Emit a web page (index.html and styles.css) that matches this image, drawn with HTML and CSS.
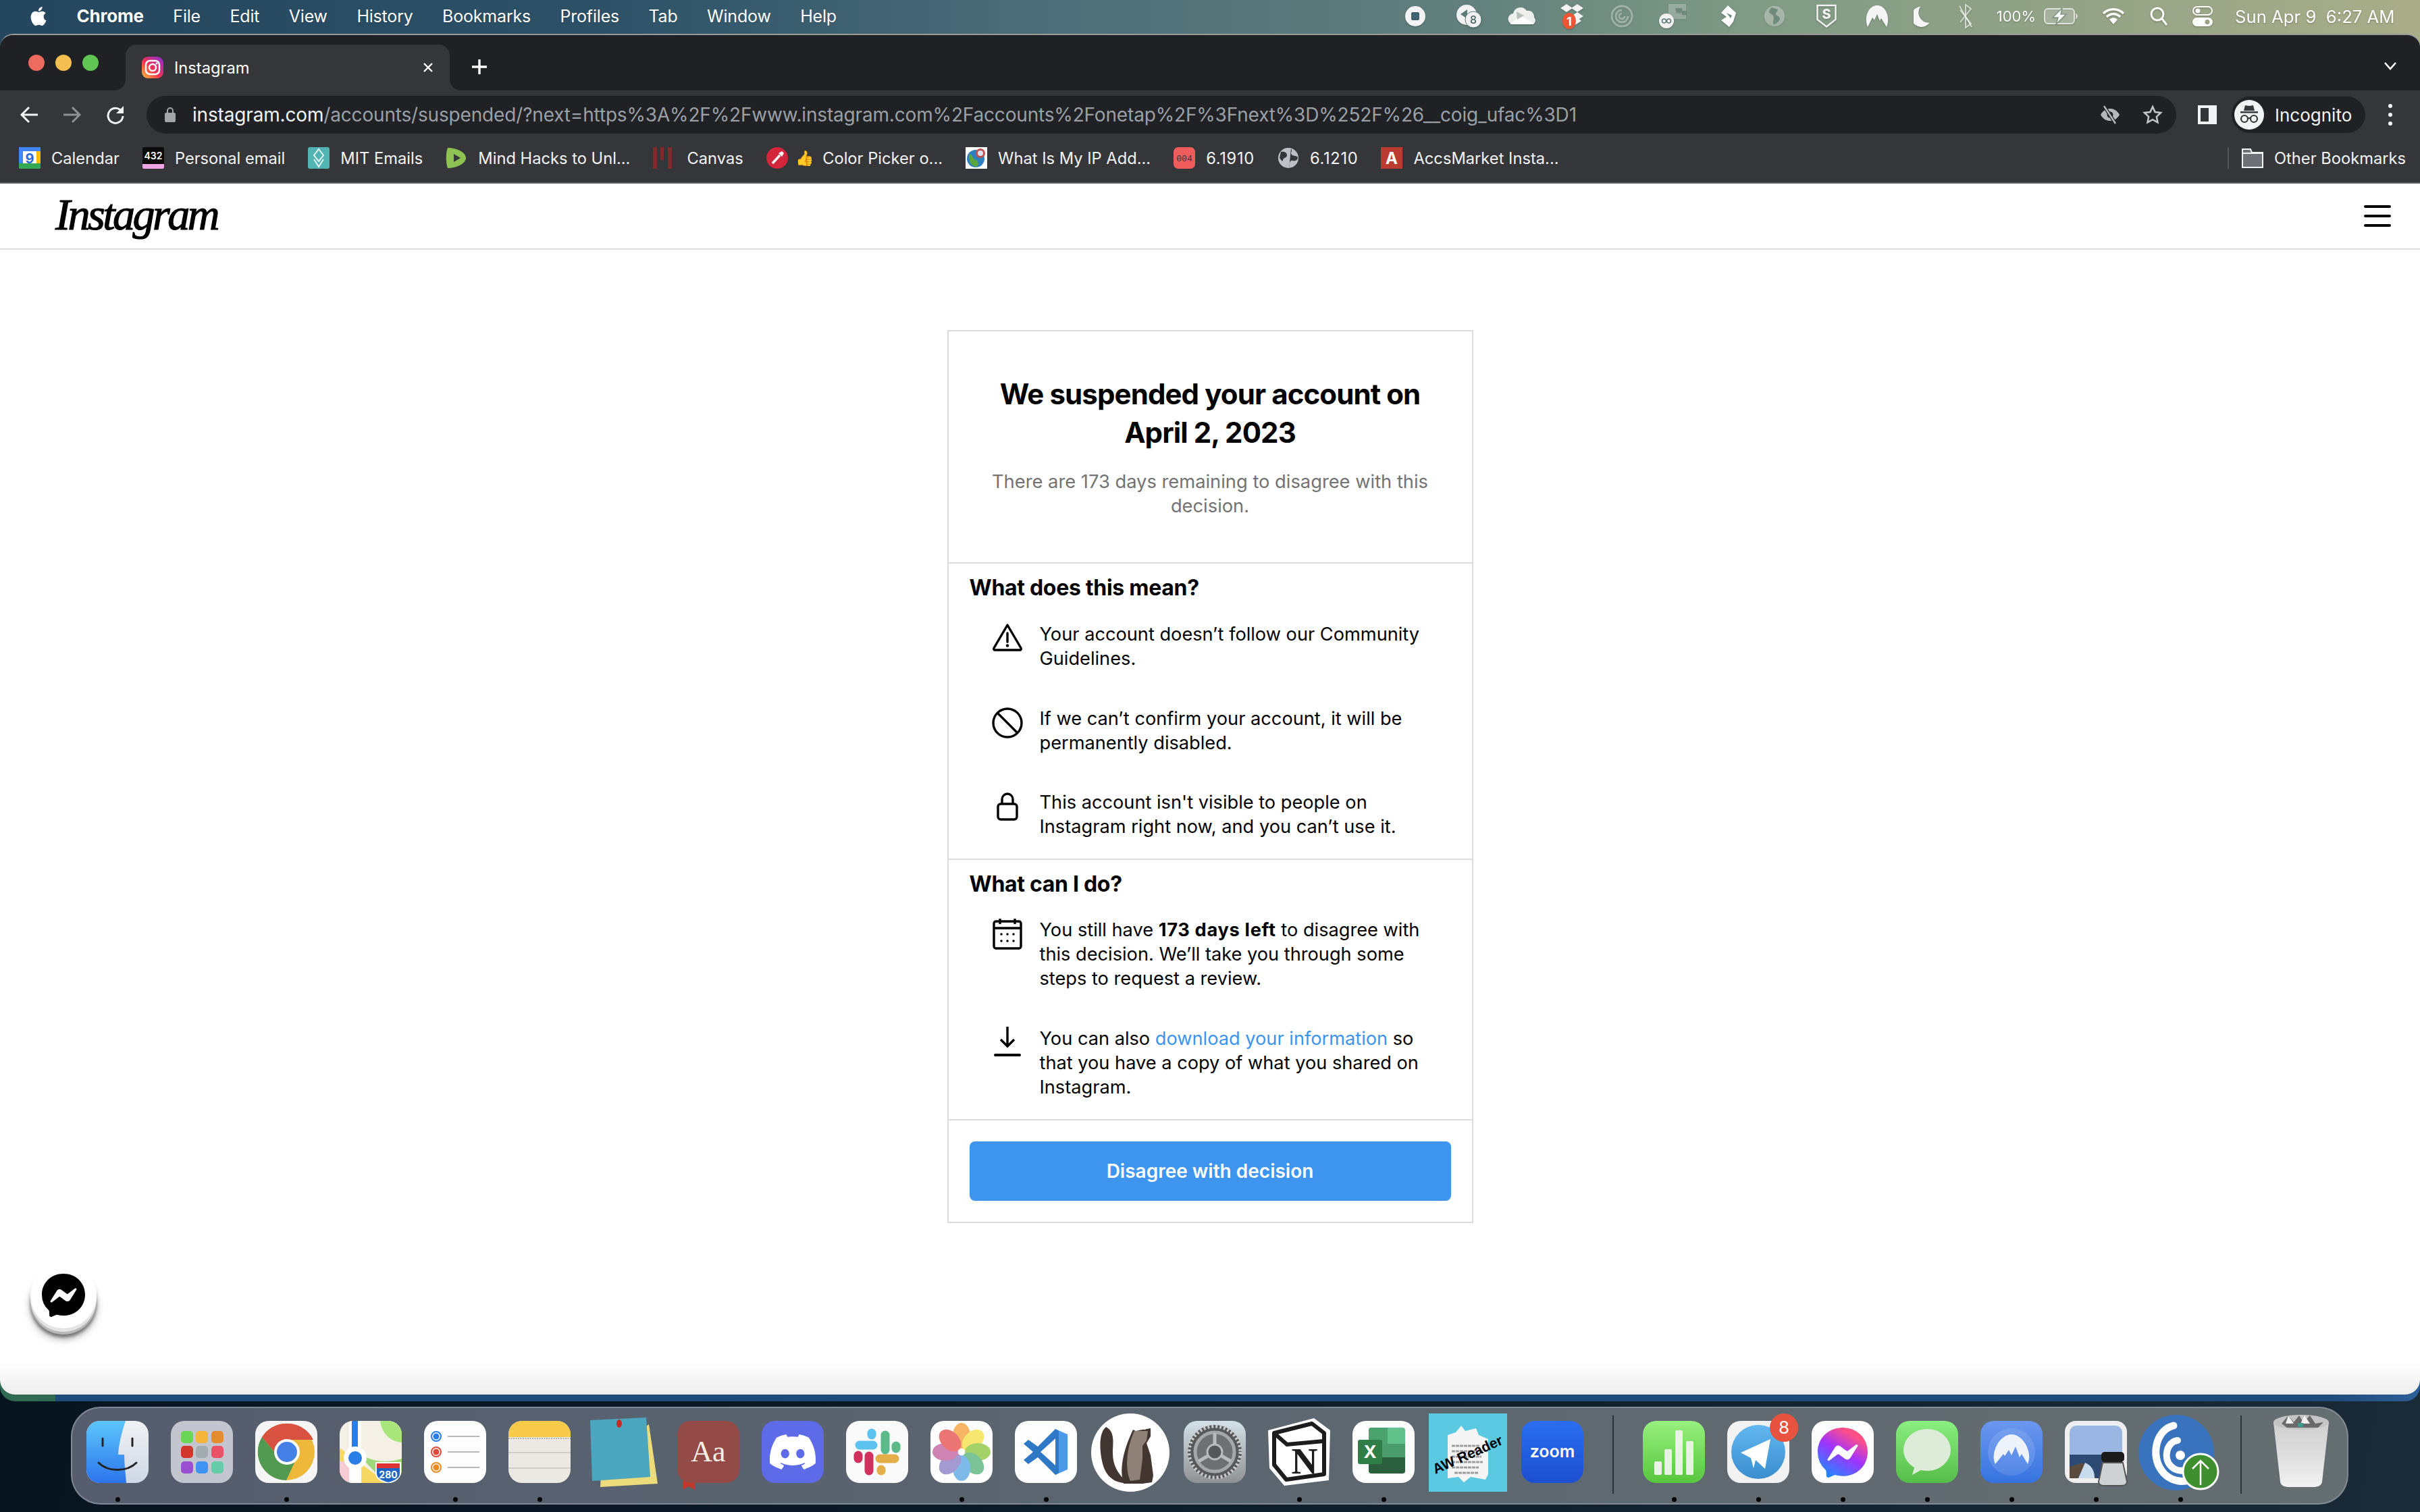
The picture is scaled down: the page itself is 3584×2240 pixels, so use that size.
FILE: index.html
```html
<!DOCTYPE html>
<html lang="en">
<head>
<meta charset="utf-8">
<title>Instagram</title>
<link rel="stylesheet" href="styles.css">
</head>
<body>
<svg class="defs" aria-hidden="true"><defs>
<linearGradient id="gIg" x1="0" y1="1" x2="1" y2="0"><stop offset="0" stop-color="#fdc13a"/><stop offset=".45" stop-color="#f0324f"/><stop offset="1" stop-color="#8a2be2"/></linearGradient>
<linearGradient id="gMsg" x1="0.2" y1="1" x2="0.8" y2="0"><stop offset="0" stop-color="#1a8cff"/><stop offset=".5" stop-color="#a033ff"/><stop offset=".85" stop-color="#ff4f87"/></linearGradient>
<linearGradient id="gFinder" x1="0" y1="0" x2="0" y2="1"><stop offset="0" stop-color="#5cc6fb"/><stop offset="1" stop-color="#2c74ec"/></linearGradient>
<linearGradient id="gFinder2" x1="0" y1="0" x2="0" y2="1"><stop offset="0" stop-color="#f0f2f4"/><stop offset="1" stop-color="#cfd8e6"/></linearGradient>
<linearGradient id="gNum" x1="0" y1="0" x2="0" y2="1"><stop offset="0" stop-color="#97f07e"/><stop offset="1" stop-color="#58c63e"/></linearGradient>
<linearGradient id="gMsgs" x1="0" y1="0" x2="0" y2="1"><stop offset="0" stop-color="#8bee80"/><stop offset="1" stop-color="#55bd4a"/></linearGradient>
<linearGradient id="gNord" x1="0" y1="0" x2="0" y2="1"><stop offset="0" stop-color="#6b97ee"/><stop offset="1" stop-color="#3673e0"/></linearGradient>
<linearGradient id="gZoom" x1="0" y1="0" x2="0" y2="1"><stop offset="0" stop-color="#2a6df0"/><stop offset="1" stop-color="#1c4fd0"/></linearGradient>
<linearGradient id="gTele" x1="0" y1="0" x2="0" y2="1"><stop offset="0" stop-color="#62b7f0"/><stop offset="1" stop-color="#3a8ecf"/></linearGradient>
<linearGradient id="gPrefs" x1="0" y1="0" x2="0" y2="1"><stop offset="0" stop-color="#d3e1e8"/><stop offset="1" stop-color="#8f9294"/></linearGradient>
<linearGradient id="gTrash" x1="0" y1="0" x2="0" y2="1"><stop offset="0" stop-color="#d0d0d0"/><stop offset=".5" stop-color="#dedede"/><stop offset="1" stop-color="#f2f2f2"/></linearGradient>
</defs></svg>

<div class="screen">
  <header class="menubar">
    <nav class="menus">
      <svg class="apple" viewBox="0 0 24 24"><path fill="#fff" d="M12.152 6.896c-.948 0-2.415-1.078-3.96-1.04-2.04.027-3.91 1.183-4.961 3.014-2.117 3.675-.546 9.103 1.519 12.09 1.013 1.454 2.208 3.09 3.792 3.039 1.52-.065 2.09-.987 3.935-.987 1.831 0 2.35.987 3.96.948 1.637-.026 2.676-1.48 3.676-2.948 1.156-1.688 1.636-3.325 1.662-3.415-.039-.013-3.182-1.221-3.22-4.857-.026-3.04 2.48-4.494 2.597-4.559-1.429-2.09-3.623-2.324-4.39-2.376-2-.156-3.675 1.09-4.61 1.09zM15.53 3.83c.843-1.012 1.4-2.427 1.245-3.83-1.207.052-2.662.805-3.532 1.818-.78.896-1.454 2.338-1.273 3.714 1.338.104 2.715-.688 3.559-1.701"/></svg>
      <span class="menu menu-app">Chrome</span>
      <span class="menu">File</span><span class="menu">Edit</span><span class="menu">View</span><span class="menu">History</span><span class="menu">Bookmarks</span><span class="menu">Profiles</span><span class="menu">Tab</span><span class="menu">Window</span><span class="menu">Help</span>
    </nav>
    <div class="status">
      <svg width="32" height="32" viewBox="0 0 32 32"><circle cx="16" cy="16" r="15" fill="#f4f4f4"/><rect x="10" y="10" width="12" height="12" rx="2" fill="#3f6470"/></svg>
      <svg width="44" height="36" viewBox="0 0 44 36"><circle cx="17" cy="16" r="15" fill="#f2f2f2"/><path d="M8 15l10-7v14z" fill="#5d7b78"/><circle cx="27" cy="23" r="12" fill="#f2f2f2" stroke="#5d7b78"/><text x="27" y="29" class="st-num">8</text></svg>
      <svg width="44" height="30" viewBox="0 0 44 30"><path d="M10 27a8 8 0 0 1-1-16 11 11 0 0 1 20-4 9 9 0 0 1 11 10 6 6 0 0 1-2 10z" fill="#eef0ee"/><path d="M4 27l16-13 20 13z" fill="#fff"/><path d="M14 8l11 6-10 6z" fill="#b5c0ba"/></svg>
      <svg width="40" height="40" viewBox="0 0 40 40"><path d="M12 2l9 6-9 6-9-6zM28 2l9 6-9 6-9-6zM28 14l9 6-9 6-9-6zM20 28l8-6 6 5-14 9z" fill="#f4f4f4"/><ellipse cx="16" cy="27" rx="10" ry="12" fill="#ee5535"/><text x="16" y="34" class="st-badge">1</text></svg>
      <svg width="36" height="36" viewBox="0 0 36 36" fill="none" stroke="#fff" stroke-opacity=".35" stroke-width="3"><circle cx="18" cy="18" r="15"/><path d="M18 9a9 9 0 1 0 9 9M18 14a4 4 0 1 0 4 4"/></svg>
      <svg width="44" height="40" viewBox="0 0 44 40"><path d="M14 2h26v22H14z" fill="#fff" fill-opacity=".28"/><path d="M24 8h10v4h6v6h-6v-3h-8z" fill="#6d8a7d"/><circle cx="11" cy="27" r="11" fill="#f1f1f1"/><circle cx="7.5" cy="27" r="3" fill="none" stroke="#5d7b78" stroke-width="1.6"/><circle cx="14.5" cy="27" r="3" fill="none" stroke="#5d7b78" stroke-width="1.6"/></svg>
      <svg width="28" height="32" viewBox="0 0 28 32"><path d="M14 0l12 11-4 13-6 8L4 22l8-5-8-6z" fill="#fff"/><path d="M12 11l8 4-2 4z" fill="#6d8a7d"/></svg>
      <svg width="32" height="32" viewBox="0 0 32 32"><circle cx="16" cy="16" r="15" fill="#fff" fill-opacity=".35"/><path d="M12 3c-4 3-5 7-2 9s5 2 5 6-2 7 0 10c5-2 9-6 9-9s-5-3-6-6 3-5 3-7z" fill="#6d8a7d"/></svg>
      <svg width="32" height="36" viewBox="0 0 32 36"><path d="M2.500 2h27v21L16 33.500 2.500 23z" fill="none" stroke="#f2f2f2" stroke-width="2.500"/><text x="16" y="22" class="st-s">S</text></svg>
      <svg width="36" height="36" viewBox="0 0 36 36"><path d="M4 34C-2 20 5 2 18 2s20 18 14 32l-8-13-2 4-4-10-4 9-3-4z" fill="#f5f5f5"/></svg>
      <svg width="26" height="32" viewBox="0 0 28 36"><path d="M11 2a17 17 0 1 0 15 27A17 17 0 0 1 11 2z" fill="#f5f5f5"/></svg>
      <svg width="22" height="36" viewBox="0 0 22 36" fill="none" stroke="#fff" stroke-opacity=".65" stroke-width="2"><path d="M3 9l16 20-8 6V1l8 6L3 27"/><path d="M2 3l18 31"/></svg>
      <span class="st-pct">100%</span>
      <svg width="50" height="24" viewBox="0 0 50 24"><rect x="1" y="1" width="44" height="22" rx="5" fill="#fff" fill-opacity=".25" stroke="#fff" stroke-opacity=".7" stroke-width="2"/><path d="M47 8v8c2 0 3-2 3-4s-1-4-3-4z" fill="#fff" fill-opacity=".6"/><path d="M27 0L13 14h8l-3 10 15-15h-8z" fill="#fff" stroke="#7f9784" stroke-width="1.500"/></svg>
      <svg width="34" height="26" viewBox="0 0 34 26" fill="none" stroke="#fff" stroke-width="3.500"><path d="M2 9a21 21 0 0 1 30 0M7 14a14 14 0 0 1 20 0"/><path d="M17 25l-6-7a8 8 0 0 1 12 0z" fill="#fff" stroke="none"/></svg>
      <svg width="28" height="30" viewBox="0 0 28 30" fill="none" stroke="#fff" stroke-width="3"><circle cx="12" cy="12" r="9"/><path d="M19 19l7 9"/></svg>
      <svg width="30" height="30" viewBox="0 0 30 30"><rect x="1" y="1" width="28" height="12" rx="6" fill="none" stroke="#fff" stroke-width="2"/><circle cx="8" cy="7" r="3.500" fill="#fff"/><rect x="0" y="17" width="30" height="13" rx="6.500" fill="#fff"/><circle cx="22" cy="23.500" r="3.500" fill="#9aa383"/></svg>
      <span class="st-date">Sun Apr 9&nbsp; 6:27 AM</span>
    </div>
  </header>

  <div class="window">
    <div class="tabstrip">
      <div class="lights"><i class="light light-r"></i><i class="light light-y"></i><i class="light light-g"></i></div>
      <div class="tab">
        <svg width="32" height="32" viewBox="0 0 32 32"><rect width="32" height="32" rx="9" fill="url(#gIg)"/><rect x="6" y="6" width="20" height="20" rx="6" fill="none" stroke="#fff" stroke-width="2.500"/><circle cx="16" cy="16" r="5" fill="none" stroke="#fff" stroke-width="2.500"/><circle cx="22" cy="10" r="1.500" fill="#fff"/></svg>
        <span class="tab-title">Instagram</span>
        <svg class="tab-close" width="16" height="16" viewBox="0 0 16 16"><path d="M2 2l12 12M14 2L2 14" stroke="#fff" stroke-width="2.400"/></svg>
      </div>
      <svg class="newtab" width="24" height="24" viewBox="0 0 24 24"><path d="M12 1v22M1 12h22" stroke="#fff" stroke-width="3.400"/></svg>
      <svg class="tabmenu" width="20" height="14" viewBox="0 0 20 14"><path d="M2 2l8 9 8-9" fill="none" stroke="#fff" stroke-width="2.600"/></svg>
    </div>

    <div class="toolbar">
      <div class="navbtn"><svg width="28" height="28" viewBox="0 0 28 28"><path d="M14 3L3 14l11 11M3 14h24" fill="none" stroke="#f1f3f4" stroke-width="3"/></svg></div>
      <div class="navbtn"><svg width="28" height="28" viewBox="0 0 28 28"><path d="M14 3l11 11-11 11M25 14H1" fill="none" stroke="#8e9094" stroke-width="3"/></svg></div>
      <div class="navbtn"><svg width="28" height="28" viewBox="0 0 28 28"><path d="M23 9a11 11 0 1 0 2 7" fill="none" stroke="#f1f3f4" stroke-width="3"/><path d="M26 1v11H15z" fill="#f1f3f4"/></svg></div>
      <div class="omnibox">
        <svg class="lock" width="16" height="22" viewBox="0 0 16 22"><rect y="8" width="16" height="14" rx="2" fill="#a3a6a9"/><path d="M4 9V5a4 4 0 0 1 8 0v4" fill="none" stroke="#a3a6a9" stroke-width="2"/></svg>
        <span class="url"><b class="url-host">instagram.com</b>/accounts/suspended/?next=https%3A%2F%2Fwww.instagram.com%2Faccounts%2Fonetap%2F%3Fnext%3D%252F%26__coig_ufac%3D1</span>
        <svg class="omni-eye" width="30" height="30" viewBox="0 0 30 30"><path d="M1 15C5 8 10 6 15 6s10 2 14 9c-4 7-9 9-14 9S5 22 1 15z" fill="#b5b7b9"/><circle cx="15" cy="15" r="4.500" fill="#202124"/><path d="M6 2l17 26" stroke="#202124" stroke-width="5"/><path d="M6 2l17 26" stroke="#b5b7b9" stroke-width="2.400"/></svg>
        <svg class="omni-star" width="30" height="30" viewBox="0 0 24 24"><path d="M12 2.500l2.900 6.300 6.800.8-5 4.700 1.300 6.800-6-3.400-6 3.400 1.300-6.800-5-4.700 6.800-.8z" fill="none" stroke="#c4c6c8" stroke-width="2"/></svg>
      </div>
      <svg class="sidebar-ic" width="28" height="28" viewBox="0 0 28 28"><rect x="0" y="0" width="28" height="28" fill="#f1f3f4"/><rect x="4" y="4" width="12" height="20" fill="#35363a"/></svg>
      <div class="incog">
        <svg width="44" height="44" viewBox="0 0 44 44"><circle cx="22" cy="22" r="22" fill="#f1f3f4"/><path d="M14 16l2-8c3 1 9 1 12 0l2 8z" fill="#35363a"/><rect x="9" y="17" width="26" height="2.500" fill="#35363a"/><circle cx="15" cy="28" r="5" fill="none" stroke="#35363a" stroke-width="2.200"/><circle cx="29" cy="28" r="5" fill="none" stroke="#35363a" stroke-width="2.200"/><path d="M20 27h4" stroke="#35363a" stroke-width="2"/></svg>
        <span class="incog-label">Incognito</span>
      </div>
      <div class="kebab"><i></i><i></i><i></i></div>
    </div>

    <div class="bookmarks">
      <div class="bm"><svg viewBox="0 0 32 32" width="32" height="32"><rect width="32" height="32" rx="3" fill="#fff"/><path d="M0 24h32v5a3 3 0 0 1-3 3H3a3 3 0 0 1-3-3z" fill="#34a853"/><rect width="6" height="24" fill="#4285f4"/><rect y="0" width="32" height="6" fill="#4285f4"/><path d="M26 6h6v18h-6z" fill="#fbbc04"/><text x="16" y="24" class="ic-cal">9</text></svg><span>Calendar</span></div>
      <div class="bm"><svg viewBox="0 0 32 32" width="32" height="32"><rect width="32" height="32" rx="2" fill="#0c0c0c"/><path d="M0 25h32v5a2 2 0 0 1-2 2H2a2 2 0 0 1-2-2z" fill="#f0a5e3"/><text x="16" y="18" class="ic-432">432</text></svg><span>Personal email</span></div>
      <div class="bm"><svg viewBox="0 0 32 32" width="32" height="32"><rect width="32" height="32" rx="3" fill="#52b3b3"/><path d="M16 3l7 9-7 9-7-9zM9 18l7 11 7-11" fill="none" stroke="#e4f4f4" stroke-width="2"/></svg><span>MIT Emails</span></div>
      <div class="bm"><svg viewBox="0 0 32 32" width="32" height="32"><path d="M3 1c14 0 27 7 27 15S17 31 3 31C0 24 0 8 3 1z" fill="#8dc252"/><path d="M12 10l10 6-10 6z" fill="#35363a"/></svg><span>Mind Hacks to Unl...</span></div>
      <div class="bm"><svg class="bm-canvas" viewBox="0 0 28 32" width="28" height="32"><path d="M0 0h6v32H0zM11 0h5v19h-5zM22 0h6v32h-6z" fill="#7d2b2b"/></svg><span>Canvas</span></div>
      <div class="bm"><svg viewBox="0 0 32 32" width="32" height="32"><circle cx="16" cy="16" r="16" fill="#d1263c"/><path d="M9 24l11-12" stroke="#fff" stroke-width="3.500"/><path d="M18 9l5 5 3-5-3-3z" fill="#fff"/></svg><span class="bm-thumb">👍</span><span>Color Picker o...</span></div>
      <div class="bm"><svg viewBox="0 0 32 32" width="32" height="32"><rect width="32" height="32" fill="#fff"/><circle cx="15" cy="17" r="13" fill="#2f80c0"/><path d="M6 10c5 2 5 8 9 9s5 6 2 10c-7 0-14-8-11-19z" fill="#5aa63a"/><circle cx="22" cy="9" r="7" fill="#c05050"/><circle cx="22" cy="9" r="4" fill="#d8e4ef"/></svg><span>What Is My IP Add...</span></div>
      <div class="bm"><svg viewBox="0 0 32 32" width="32" height="32"><rect width="32" height="32" rx="7" fill="#ee5d5b"/><text x="16" y="21" class="ic-004">004</text></svg><span class="bm-num">6.1910</span></div>
      <div class="bm"><svg viewBox="0 0 32 32" width="32" height="32"><circle cx="16" cy="16" r="15" fill="#bdc1c6"/><path d="M5 7c5-1 9 1 9 5s-5 3-6 7-3-1-5-3M20 2c3 5-2 6 1 9s7 1 9 4c0 5-5 6-8 5s-5 4-5 11" fill="#35363a"/></svg><span class="bm-num">6.1210</span></div>
      <div class="bm"><svg viewBox="0 0 32 32" width="32" height="32"><rect width="32" height="32" fill="#bb3b31"/><text x="16" y="25" class="ic-a">A</text></svg><span>AccsMarket Insta...</span></div>
      <div class="bm bm-other"><svg viewBox="0 0 32 32" width="32" height="32"><path d="M1 30V3h12l2 5h16v22z" fill="#6e7075" stroke="#f1f3f4" stroke-width="2"/><path d="M1 9h30" stroke="#f1f3f4" stroke-width="2"/></svg><span>Other Bookmarks</span></div>
    </div>

    <div class="page">
      <div class="ig-header">
        <span class="ig-logo">Instagram</span>
        <div class="burger"><i></i><i></i><i></i></div>
      </div>
      <main class="ig-main">
        <section class="card">
          <div class="card-head">
            <h1 class="title">We suspended your account on April 2, 2023</h1>
            <p class="sub">There are 173 days remaining to disagree with this decision.</p>
          </div>
          <div class="card-sec">
            <h2 class="sec-title">What does this mean?</h2>
            <div class="rows">
              <div class="row">
                <svg class="row-ic" viewBox="0 0 48 48"><path d="M24 4L4 38q-1 3 2 3h36q3 0 2-3z" fill="none" stroke="#000" stroke-width="3.400" stroke-linejoin="round"/><path d="M24 16v13" stroke="#000" stroke-width="3.400" stroke-linecap="round"/><circle cx="24" cy="34.500" r="2.200"/></svg>
                <p>Your account doesn’t follow our Community Guidelines.</p>
              </div>
              <div class="row">
                <svg class="row-ic" viewBox="0 0 48 48"><circle cx="24" cy="24" r="21" fill="none" stroke="#000" stroke-width="3.400"/><path d="M9 9l30 30" stroke="#000" stroke-width="3.400"/></svg>
                <p>If we can’t confirm your account, it will be permanently disabled.</p>
              </div>
              <div class="row">
                <svg class="row-ic" viewBox="0 0 48 48"><rect x="10" y="20" width="28" height="23" rx="4" fill="none" stroke="#000" stroke-width="3.400"/><path d="M16 20v-7a8 8 0 0 1 16 0v7" fill="none" stroke="#000" stroke-width="3.400"/></svg>
                <p>This account isn't visible to people on Instagram right now, and you can’t use it.</p>
              </div>
            </div>
          </div>
          <div class="card-sec">
            <h2 class="sec-title">What can I do?</h2>
            <div class="rows rows-do">
              <div class="row">
                <svg class="row-ic" viewBox="0 0 48 48"><rect x="4" y="5" width="40" height="40" rx="3" fill="none" stroke="#000" stroke-width="3.400"/><path d="M4 15h40M13 1v8M35 1v8" stroke="#000" stroke-width="3.400"/><g><circle cx="15" cy="24" r="1.800"/><circle cx="24" cy="24" r="1.800"/><circle cx="33" cy="24" r="1.800"/><circle cx="15" cy="34" r="1.800"/><circle cx="24" cy="34" r="1.800"/><circle cx="33" cy="34" r="1.800"/></g></svg>
                <p>You still have <b>173 days left</b> to disagree with this decision. We’ll take you through some steps to request a review.</p>
              </div>
              <div class="row">
                <svg class="row-ic" viewBox="0 0 48 48"><path d="M24 0v27M14 19l10 10 10-10" fill="none" stroke="#000" stroke-width="3.400"/><path d="M6 42h36" stroke="#000" stroke-width="4" stroke-linecap="round"/></svg>
                <p>You can also <a class="link">download your information</a> so that you have a copy of what you shared on Instagram.</p>
              </div>
            </div>
          </div>
          <div class="card-foot"><button class="cta">Disagree with decision</button></div>
        </section>
      </main>
      <div class="fab"><svg width="64" height="64" viewBox="0 0 24 24"><path d="M.001 11.639C.001 4.949 5.241 0 12.001 0S24 4.95 24 11.639c0 6.689-5.24 11.638-11.999 11.638-1.21 0-2.38-.16-3.47-.46a.96.96 0 00-.64.05l-2.39 1.05a.96.96 0 01-1.35-.85l-.07-2.14a.97.97 0 00-.32-.68A11.39 11.389 0 01.002 11.64zm8.32-2.19l-3.52 5.6c-.35.53.32 1.139.82.75l3.79-2.87c.26-.2.6-.2.87 0l2.8 2.1c.84.63 2.04.4 2.6-.48l3.52-5.6c.35-.53-.32-1.13-.82-.75l-3.79 2.87c-.25.2-.6.2-.86 0l-2.8-2.1a1.8 1.8 0 00-2.61.48z"/></svg></div>
    </div>
  </div>

  <footer class="desk">
    <div class="dock">
      <div class="app"><svg viewBox="0 0 92 92"><rect width="92" height="92" rx="20" fill="url(#gFinder2)"/><path d="M20 0h38c-6 18-10 34-11 50h9c0 14 2 28 3 42H20A20 20 0 0 1 0 72V20A20 20 0 0 1 20 0z" fill="url(#gFinder)"/><path d="M24 26v11M68 26v11" stroke="#222" stroke-width="3" stroke-linecap="round"/><path d="M18 62c14 14 42 14 56 0" fill="none" stroke="#222" stroke-width="3" stroke-linecap="round"/></svg><i class="dot"></i></div>
      <div class="app"><svg viewBox="0 0 92 92"><rect width="92" height="92" rx="20" fill="#c3c6ce"/><g><rect x="15" y="15" width="18" height="18" rx="5" fill="#6ad658"/><rect x="37" y="15" width="18" height="18" rx="5" fill="#f5b53a"/><rect x="60" y="15" width="18" height="18" rx="5" fill="#e58c30"/><rect x="15" y="37" width="18" height="18" rx="5" fill="#d0362a"/><rect x="37" y="37" width="18" height="18" rx="5" fill="#a3adb1"/><rect x="60" y="37" width="18" height="18" rx="5" fill="#ea5268"/><rect x="15" y="60" width="18" height="18" rx="5" fill="#9a4fd0"/><rect x="37" y="60" width="18" height="18" rx="5" fill="#3f93f2"/><rect x="60" y="60" width="18" height="18" rx="5" fill="#64cda8"/></g></svg></div>
      <div class="app"><svg viewBox="0 0 92 92"><rect width="92" height="92" rx="20" fill="#f5f5f5"/><circle cx="46" cy="46" r="42" fill="#eeb93a"/><path d="M46 4A42 42 0 0 0 10 24l20 24 16-20h40A42 42 0 0 0 46 4z" fill="#d95140"/><path d="M10 24a42 42 0 0 0 36 64l12-26-28-14z" fill="#529a52"/><circle cx="47" cy="46" r="19" fill="#fff"/><circle cx="47" cy="46" r="15" fill="#4580e6"/></svg><i class="dot"></i></div>
      <div class="app"><svg viewBox="0 0 92 92"><defs><clipPath id="cMaps"><rect width="92" height="92" rx="20"/></clipPath></defs><g clip-path="url(#cMaps)"><rect width="92" height="92" fill="#f4f0e6"/><path d="M60 0h32v32C72 30 62 16 60 0z" fill="#a8e67c"/><path d="M0 40l70 52H0z" fill="#f6d860"/><path d="M22 44l46 48h24V56C60 66 40 56 22 44z" fill="#9fd87a"/><rect x="0" y="60" width="14" height="32" fill="#f8ccd4"/><rect x="14" y="0" width="18" height="92" fill="#fff"/><rect x="18" y="0" width="9" height="46" fill="#2a7ee8"/><circle cx="23" cy="55" r="17" fill="#fff"/><circle cx="23" cy="55" r="10" fill="#2a7ee8"/><path d="M54 62h36v16c0 8-10 12-18 14-8-2-18-6-18-14z" fill="#1f66c4" stroke="#fff" stroke-width="2"/><rect x="55" y="63" width="34" height="7" fill="#d33"/><text x="72" y="85" class="ic-280">280</text></g></svg></div>
      <div class="app"><svg viewBox="0 0 92 92"><rect width="92" height="92" rx="20" fill="#fdfdfd"/><g fill="none" stroke-width="2"><circle cx="18" cy="23" r="7" stroke="#2a7ee8"/><circle cx="18" cy="46" r="7" stroke="#e04a3b"/><circle cx="18" cy="69" r="7" stroke="#e88c20"/></g><circle cx="18" cy="23" r="4.500" fill="#2a7ee8"/><circle cx="18" cy="46" r="4.500" fill="#e04a3b"/><circle cx="18" cy="69" r="4.500" fill="#e88c20"/><path d="M35 23h47M35 46h47M35 69h47" stroke="#b8b8b8" stroke-width="2"/></svg><i class="dot"></i></div>
      <div class="app"><svg viewBox="0 0 92 92"><rect width="92" height="92" rx="20" fill="#ece9e3"/><path d="M0 24V20A20 20 0 0 1 20 0h52a20 20 0 0 1 20 20v4z" fill="#f8ca4a"/><path d="M0 26h92" stroke="#b5b3ae" stroke-width="2" stroke-dasharray="2 1.500"/><path d="M0 47h92M0 70h92" stroke="#cfcdc8" stroke-width="2"/></svg><i class="dot"></i></div>
      <div class="app"><svg viewBox="0 0 92 92"><path d="M13 60L83 5l13 88-85 5z" fill="#eddc7b"/><path d="M-4-1L79-5l6 88-86 6z" fill="#4ba6c0"/><ellipse cx="39" cy="4" rx="4" ry="6" fill="#c62a22"/></svg></div>
      <div class="app"><svg viewBox="0 0 92 92"><path d="M8 88h18v14l-9-5-9 5z" fill="#c0392b"/><rect width="92" height="92" rx="20" fill="#944a47"/><text x="46" y="60" class="ic-aa">Aa</text></svg></div>
      <div class="app"><svg viewBox="0 0 92 92"><rect width="92" height="92" rx="20" fill="#5d6be8"/><svg x="12" y="12" width="68" height="68" viewBox="0 0 24 24"><path fill="#fff" d="M20.317 4.3698a19.7913 19.7913 0 00-4.8851-1.5152.0741.0741 0 00-.0785.0371c-.211.3753-.4447.8648-.6083 1.2495-1.8447-.2762-3.68-.2762-5.4868 0-.1636-.3933-.4058-.8742-.6177-1.2495a.077.077 0 00-.0785-.037 19.7363 19.7363 0 00-4.8852 1.515.0699.0699 0 00-.0321.0277C.5334 9.0458-.319 13.5799.0992 18.0578a.0824.0824 0 00.0312.0561c2.0528 1.5076 4.0413 2.4228 5.9929 3.0294a.0777.0777 0 00.0842-.0276c.4616-.6304.8731-1.2952 1.226-1.9942a.076.076 0 00-.0416-.1057c-.6528-.2476-1.2743-.5495-1.8722-.8923a.077.077 0 01-.0076-.1277c.1258-.0943.2517-.1923.3718-.2914a.0743.0743 0 01.0776-.0105c3.9278 1.7933 8.18 1.7933 12.0614 0a.0739.0739 0 01.0785.0095c.1202.099.246.1981.3728.2924a.077.077 0 01-.0066.1276 12.2986 12.2986 0 01-1.873.8914.0766.0766 0 00-.0407.1067c.3604.698.7719 1.3628 1.225 1.9932a.076.076 0 00.0842.0286c1.961-.6067 3.9495-1.5219 6.0023-3.0294a.077.077 0 00.0313-.0552c.5004-5.177-.8382-9.6739-3.5485-13.6604a.061.061 0 00-.0312-.0286zM8.02 15.3312c-1.1825 0-2.1569-1.0857-2.1569-2.419 0-1.3332.9555-2.4189 2.157-2.4189 1.2108 0 2.1757 1.0952 2.1568 2.419 0 1.3332-.9555 2.4189-2.1569 2.4189zm7.9748 0c-1.1825 0-2.1569-1.0857-2.1569-2.419 0-1.3332.9554-2.4189 2.1569-2.4189 1.2108 0 2.1757 1.0952 2.1568 2.419 0 1.3332-.946 2.4189-2.1568 2.4189Z"/></svg></svg></div>
      <div class="app"><svg viewBox="0 0 92 92"><rect width="92" height="92" rx="20" fill="#fafafa"/><g stroke-width="13" stroke-linecap="round"><path d="M58 21v22" stroke="#5cb98a"/><path d="M74 37v4" stroke="#5cb98a"/><path d="M72 56H50" stroke="#e4ae48"/><path d="M52 72v2" stroke="#e4ae48"/><path d="M34 52v22" stroke="#d0315f"/><path d="M18 51v5" stroke="#d0315f"/><path d="M40 36H20" stroke="#5cc3ee"/><path d="M38 18v3" stroke="#5cc3ee"/></g></svg></div>
      <div class="app"><svg viewBox="0 0 92 92"><rect width="92" height="92" rx="20" fill="#fdfdfd"/><g opacity=".78"><ellipse cx="46" cy="22" rx="13" ry="19" fill="#f3a23a"/><ellipse cx="46" cy="22" rx="13" ry="19" fill="#f6e148" transform="rotate(45 46 46)"/><ellipse cx="46" cy="22" rx="13" ry="19" fill="#8cc63f" transform="rotate(90 46 46)"/><ellipse cx="46" cy="22" rx="13" ry="19" fill="#59b37c" transform="rotate(135 46 46)"/><ellipse cx="46" cy="22" rx="13" ry="19" fill="#5ba8e4" transform="rotate(180 46 46)"/><ellipse cx="46" cy="22" rx="13" ry="19" fill="#8a7fc7" transform="rotate(225 46 46)"/><ellipse cx="46" cy="22" rx="13" ry="19" fill="#c1629f" transform="rotate(270 46 46)"/><ellipse cx="46" cy="22" rx="13" ry="19" fill="#e5504d" transform="rotate(315 46 46)"/></g></svg><i class="dot"></i></div>
      <div class="app"><svg viewBox="0 0 92 92"><rect width="92" height="92" rx="20" fill="#fdfdfd"/><path d="M60 12l18 8v52l-18 8z" fill="#4a9ae8"/><path d="M60 12L34 38 20 28l-7 6 14 12-14 12 7 6 14-10 26 26 5-3V15z" fill="#2f78c5"/><path d="M60 26v40L38 46z" fill="#fdfdfd"/></svg><i class="dot"></i></div>
      <div class="app app-big"><svg viewBox="0 0 116 116"><circle cx="58" cy="58" r="58" fill="#fff"/><path d="M22 20c-10 8-10 30-6 50 3 16 12 32 34 33v-4c-10-10-18-22-18-40 0-14 4-32-10-39z" fill="#433630"/><path d="M62 24l4 2 10-2 12-2v12l-6 10 6 18 4 30-2 10-14 2H48c-6-20-2-46 14-80z" fill="#433630"/><path d="M64 26h20l-2 14-6 8v20l-4 30-14 2c-8-18-6-48 6-74z" fill="#8f8178"/><path d="M50 36c8-22 26-24 30-12" fill="none" stroke="#fff" stroke-width="2"/></svg></div>
      <div class="app"><svg viewBox="0 0 92 92"><rect width="92" height="92" rx="20" fill="url(#gPrefs)"/><circle cx="46" cy="46" r="40" fill="#565859"/><circle cx="46" cy="46" r="38" fill="none" stroke="#c8c8c8" stroke-width="5" stroke-dasharray="3 3"/><circle cx="46" cy="46" r="29" fill="#6e7173" stroke="#a5a7a9" stroke-width="5"/><path d="M46 46V18M46 46L22 60M46 46l24 14" stroke="#b8babb" stroke-width="5"/><circle cx="46" cy="46" r="11" fill="#55585a" stroke="#b8babb" stroke-width="3"/></svg></div>
      <div class="app"><svg viewBox="0 0 92 92"><path d="M0 14L68-4l24 18-2 74-66 8L2 70z" fill="#fff"/><path d="M9 18l56-14 18 14v61l-56 8-18-22z" fill="#fff" stroke="#1c1c1c" stroke-width="6" stroke-linejoin="round"/><path d="M11 20l17 15 54-5" fill="none" stroke="#1c1c1c" stroke-width="6"/><text x="54" y="78" class="ic-n">N</text></svg><i class="dot"></i></div>
      <div class="app"><svg viewBox="0 0 92 92"><rect width="92" height="92" rx="20" fill="#fdfdfd"/><path d="M24 14a4 4 0 0 1 4-4h46a4 4 0 0 1 4 4v20H24z" fill="#62c08b"/><path d="M24 14a4 4 0 0 1 4-4h24v24H24z" fill="#4aa36e"/><rect x="24" y="34" width="54" height="40" fill="#4a9c6c"/><path d="M24 54h54v20a4 4 0 0 1-4 4H28a4 4 0 0 1-4-4z" fill="#2c5f3e"/><rect x="8" y="28" width="36" height="36" rx="3" fill="#2f7d47"/><text x="26" y="55" class="ic-x">X</text></svg><i class="dot"></i></div>
      <div class="app app-big"><svg viewBox="0 0 116 116"><rect width="116" height="116" fill="#5bc9e1"/><path d="M28 32l12-4 8-10 6 8 16-4 4 10 14 6v52l-4 8-22-4-10 8-8-8-16 2z" fill="#f5f5f5"/><path d="M34 48h42M34 56h46M34 64h44M34 72h46M34 80h40M38 88h36" stroke="#9d9d9d" stroke-width="3" stroke-dasharray="5 1"/><text x="58" y="68" class="ic-aw" transform="rotate(-24 58 62)">AW Reader</text></svg></div>
      <div class="app"><svg viewBox="0 0 92 92"><rect width="92" height="92" rx="20" fill="url(#gZoom)"/><text x="46" y="54" class="ic-zoom">zoom</text></svg></div>
      <i class="dock-sep"></i>
      <div class="app"><svg viewBox="0 0 92 92"><rect width="92" height="92" rx="20" fill="url(#gNum)"/><g fill="#e8f3e3"><rect x="17" y="60" width="11" height="20" rx="2"/><rect x="32" y="42" width="11" height="38" rx="2"/><rect x="48" y="14" width="11" height="66" rx="2"/><rect x="64" y="30" width="11" height="50" rx="2"/></g></svg><i class="dot"></i></div>
      <div class="app"><svg viewBox="0 0 92 92"><rect width="92" height="92" rx="20" fill="#f2f2f2"/><circle cx="46" cy="46" r="40" fill="url(#gTele)"/><path d="M20 47l44-20-8 44-14-13-3 12-4-15z" fill="#fff"/><circle cx="84" cy="10" r="21" fill="#e8533f"/><text x="84" y="19" class="ic-8">8</text></svg><i class="dot"></i></div>
      <div class="app"><svg viewBox="0 0 92 92"><rect width="92" height="92" rx="20" fill="#fdfdfd"/><svg x="9" y="9" width="74" height="76" viewBox="0 0 24 24"><path fill="url(#gMsg)" d="M.001 11.639C.001 4.949 5.241 0 12.001 0S24 4.95 24 11.639c0 6.689-5.24 11.638-11.999 11.638-1.21 0-2.38-.16-3.47-.46a.96.96 0 00-.64.05l-2.39 1.05a.96.96 0 01-1.35-.85l-.07-2.14a.97.97 0 00-.32-.68A11.39 11.389 0 01.002 11.64zm8.32-2.19l-3.52 5.6c-.35.53.32 1.139.82.75l3.79-2.87c.26-.2.6-.2.87 0l2.8 2.1c.84.63 2.04.4 2.6-.48l3.52-5.6c.35-.53-.32-1.13-.82-.75l-3.79 2.87c-.25.2-.6.2-.86 0l-2.8-2.1a1.8 1.8 0 00-2.61.48z"/></svg></svg><i class="dot"></i></div>
      <div class="app"><svg viewBox="0 0 92 92"><rect width="92" height="92" rx="20" fill="url(#gMsgs)"/><ellipse cx="46" cy="43" rx="35" ry="31" fill="#dcecd8"/><path d="M28 66l-4 14 18-10z" fill="#dcecd8"/></svg><i class="dot"></i></div>
      <div class="app"><svg viewBox="0 0 92 92"><rect width="92" height="92" rx="20" fill="url(#gNord)"/><circle cx="46" cy="46" r="35" fill="#fff" fill-opacity=".12"/><path d="M22 64c-8-16 6-44 24-44s32 28 24 44l-9-15-3 5-6-16-6 13-4-8-6 9-2-3z" fill="#eef3fb"/></svg><i class="dot"></i></div>
      <div class="app"><svg viewBox="0 0 92 92"><rect width="92" height="92" rx="16" fill="#efefef"/><rect x="7" y="7" width="78" height="78" rx="10" fill="#9ab7e3"/><path d="M7 50h78v35H7z" fill="#2d4a75"/><path d="M7 68l20-6 20 23H7z" fill="#5b4a3e"/><path d="M30 62c10 4 14 12 14 23H20z" fill="#c7dcec"/><rect x="54" y="46" width="34" height="15" rx="5" fill="#1b1b1b"/><path d="M56 62h30l6 28q0 6-8 6H58q-8 0-8-6z" fill="#cfd2d4" stroke="#555" stroke-width="2"/></svg><i class="dot"></i></div>
      <div class="app app-big app-cc"><svg viewBox="0 0 116 116"><circle cx="52" cy="58" r="56" fill="#3a73bd"/><path d="M48 18C22 24 14 62 30 84c8 12 22 18 36 16" fill="none" stroke="#fff" stroke-width="11" stroke-linecap="round"/><path d="M54 40c-16 2-22 26-10 38 8 8 18 8 26 4" fill="none" stroke="#fff" stroke-width="10" stroke-linecap="round"/><circle cx="58" cy="62" r="7" fill="#fff"/><circle cx="88" cy="86" r="26" fill="#3f8f2f" stroke="#fff" stroke-width="3"/><path d="M88 106V70M76 82l12-12 12 12" fill="none" stroke="#fff" stroke-width="2.500"/></svg><i class="dot"></i></div>
      <i class="dock-sep"></i>
      <div class="app"><svg viewBox="0 0 92 92"><path d="M4 2l10 88q1 8 14 8h34q13 0 14-8L86 2z" fill="url(#gTrash)"/><ellipse cx="45" cy="2" rx="41" ry="11" fill="#c4c4c4"/><path d="M16 4l10-12 8 10 8-10 6 10 10-10 8 12 12-2-8 8H24z" fill="#6a6a6a"/><path d="M26-8l8 12H22zM50-8l8 12H44z" fill="#f2f2f2"/><path d="M40 3h8v6h-8z" fill="#3e9a8d"/></svg></div>
    </div>
  </footer>
</div>
</body>
</html>
```

FILE: styles.css
```css
* { box-sizing: border-box; }
html, body { margin: 0; padding: 0; }
body { font-family: Inter, "Liberation Sans", sans-serif; }
.defs { position: absolute; width: 0; height: 0; }

.screen {
  width: 3584px;
  height: 2240px;
  overflow: hidden;
  display: flex;
  flex-direction: column;
  background:
    linear-gradient(90deg, #24465e 0, #2c5167 25%, #4b6c78 42%, #607f7c 60%, #7f9a85 72%, #a9ad88 100%) top / 100% 70px no-repeat,
    linear-gradient(100deg, #06131f 0, #0c1b28 50%, #1a2a36 100%);
}

/* menu bar */
.menubar { height: 50px; flex: none; display: flex; align-items: center; color: #fff; }
.menus { display: flex; align-items: center; gap: 43.500px; padding-left: 43px; margin-top: -3px; }
.apple { width: 28px; height: 32px; margin-right: -1px; }
.menu { font-size: 25px; font-weight: 400; letter-spacing: -.2px; text-shadow: 0 1px 1px rgba(0,0,0,.25); }
.menu-app { font-size: 26px; font-weight: 700; }
.status {
  margin-left: auto;
  width: 1526px;
  display: grid;
  grid-template-columns: 76px 86px 68px 80px 68px 86px 74px 64px 90px 60px 74px 54px 84px 60px 96px 38px 92px 218px;
  justify-items: center;
  align-items: center;
  margin-top: -2px;
  filter: drop-shadow(0 1px 1px rgba(0,0,0,.25));
}
.st-pct { justify-self: end; margin-right: 7px; font-size: 22px; }
.st-date { justify-self: start; margin-left: 2px; font-size: 25.7px; white-space: nowrap; }
.st-num { font: 500 16px Inter, sans-serif; fill: #44605f; text-anchor: middle; }
.st-badge { font: 700 18px Inter, sans-serif; fill: #fff; text-anchor: middle; }
.st-s { font: 800 20px Inter, sans-serif; fill: #f2f2f2; text-anchor: middle; }

/* window */
.window {
  flex: 1;
  min-height: 0;
  display: flex;
  flex-direction: column;
  border-top: 2px solid #9b9b98;
  border-radius: 20px 20px 22px 22px;
  padding-bottom: 10px;
  overflow: hidden;
  background: linear-gradient(90deg, #2f6b52 0 82px, #1f4b7a 82px 3450px, #2c5f98 100%);
}
.tabstrip { height: 82px; flex: none; display: flex; align-items: center; background: #202124; position: relative; }
.lights { display: flex; gap: 16px; padding-left: 42px; }
.light { width: 24px; height: 24px; border-radius: 50%; }
.light-r { background: #ed6a5e; }
.light-y { background: #f5bf4f; }
.light-g { background: #61c554; }
.tab {
  width: 480px;
  height: 68px;
  align-self: flex-end;
  margin-left: 40px;
  display: flex;
  align-items: center;
  padding: 0 24px;
  background: #35363a;
  border-radius: 16px 16px 0 0;
  color: #fff;
  position: relative;
}
.tab::before, .tab::after { content: ""; position: absolute; bottom: 0; width: 16px; height: 16px; }
.tab::before { left: -16px; background: radial-gradient(circle at 0 0, #202124 15.5px, #35363a 16px); }
.tab::after { right: -16px; background: radial-gradient(circle at 100% 0, #202124 15.5px, #35363a 16px); }
.tab-title { margin-left: 16px; font-size: 23.7px; }
.tab-close { margin-left: auto; }
.newtab { margin: 12px 0 0 32px; }
.tabmenu { margin: 10px 34px 0 auto; }

.toolbar { height: 64px; flex: none; display: flex; align-items: center; background: #35363a; padding: 8px 0 0 11px; }
.navbtn { width: 64px; display: flex; justify-content: center; }
.omnibox {
  width: 3006px;
  height: 56px;
  margin-left: 14px;
  padding: 0 20px 0 27px;
  display: flex;
  align-items: center;
  border-radius: 28px;
  background: #202124;
}
.lock { margin-right: 25px; flex: none; }
.url { font-size: 28px; color: #9aa0a6; white-space: nowrap; letter-spacing: -.17px; }
.url-host { font-weight: 400; color: #f1f3f4; }
.omni-eye { margin-left: auto; }
.omni-star { margin-left: 33px; }
.sidebar-ic { margin-left: 32px; }
.incog {
  width: 198px;
  height: 54px;
  margin-left: 22px;
  padding-left: 4px;
  display: flex;
  align-items: center;
  gap: 16px;
  border-radius: 27px;
  background: #202124;
  color: #f1f3f4;
}
.incog-label { font-size: 26px; }
.kebab { margin-left: 34px; display: flex; flex-direction: column; gap: 7px; }
.kebab i { width: 6px; height: 6px; border-radius: 50%; background: #f1f3f4; }

.bookmarks { height: 74px; flex: none; display: flex; align-items: center; gap: 34px; padding: 0 21px 0 28px; background: #35363a; border-bottom: 2px solid #5f6065; color: #f1f3f4; font-size: 23.7px; }
.bm { display: flex; align-items: center; gap: 16px; white-space: nowrap; }
.bm-canvas { margin-right: 6px; }
.bm-num { letter-spacing: .7px; }
.bm-thumb { font-size: 22px; font-family: "Noto Color Emoji", Inter, sans-serif; margin-left: -4px; margin-right: -4px; color: #f6b73c; }
.bm-other { margin-left: auto; position: relative; }
.bm-other::before { content: ""; position: absolute; left: -21px; top: 0; bottom: 0; width: 2px; background: #55565b; }
.ic-cal { font: 700 20px Inter, sans-serif; fill: #2a6dd8; text-anchor: middle; }
.ic-432 { font: 600 14px Inter, sans-serif; fill: #fff; text-anchor: middle; }
.ic-004 { font: 500 13px "Liberation Mono", monospace; fill: #35363a; text-anchor: middle; }
.ic-a { font: 700 24px Inter, sans-serif; fill: #fff; text-anchor: middle; }
.ic-280 { font: 700 14px Inter, sans-serif; fill: #fff; text-anchor: middle; }
.ic-aa { font: 400 44px "Liberation Serif", serif; fill: #f5eee2; text-anchor: middle; }
.ic-n { font: 700 54px "Liberation Serif", serif; fill: #1c1c1c; text-anchor: middle; }
.ic-x { font: 700 26px Inter, sans-serif; fill: #fff; text-anchor: middle; }
.ic-aw { font: 700 21px "Liberation Sans", sans-serif; fill: #000; text-anchor: middle; }
.ic-zoom { font: 600 25px Inter, sans-serif; fill: #fff; text-anchor: middle; }
.ic-8 { font: 400 26px Inter, sans-serif; fill: #fff; text-anchor: middle; }

/* page */
.page {
  flex: 1;
  min-height: 0;
  position: relative;
  display: flex;
  flex-direction: column;
  border-radius: 0 0 22px 22px;
  background: linear-gradient(180deg, #fff 0, #fff calc(100% - 50px), #eee 100%);
}
.ig-header { height: 98px; flex: none; display: flex; align-items: center; justify-content: space-between; padding: 0 43px 0 82px; background: #fff; border-bottom: 2px solid #dbdbdb; }
.ig-logo { font: italic 400 66px "Liberation Serif", serif; letter-spacing: -3.5px; color: #000; -webkit-text-stroke: 1.2px #000; margin-top: -4px; }
.burger { display: flex; flex-direction: column; gap: 10px; width: 40px; }
.burger i { height: 4px; border-radius: 2px; background: #000; }

.ig-main { flex: 1; display: flex; justify-content: center; align-items: flex-start; padding-top: 119px; }
.card { width: 779px; border: 2px solid #dbdbdb; background: #fff; color: #000; }
.card-head { padding: 64px 40px 65px; text-align: center; }
.title { margin: 0; font-size: 42px; line-height: 57px; font-weight: 700; letter-spacing: -.9px; }
.sub { margin: 27px 0 0; font-size: 27.3px; line-height: 36px; color: #737373; }
.card-sec { border-top: 2px solid #dbdbdb; padding: 16px 31px 29px; }
.sec-title { margin: 0; font-size: 32px; line-height: 40px; font-weight: 700; letter-spacing: -.3px; }
.rows { display: flex; flex-direction: column; gap: 52.500px; margin-top: 31px; padding-left: 32px; }
.rows-do { gap: 53px; margin-top: 30px; }
.row { display: flex; gap: 24px; align-items: flex-start; }
.row p { margin: 0; width: 590px; font-size: 27.2px; line-height: 36px; }
.row b { font-weight: 700; letter-spacing: .7px; }
.row-ic { width: 48px; height: 48px; flex: none; overflow: visible; }
.link { color: #3c94ee; }
.card-foot { border-top: 2px solid #dbdbdb; padding: 31px 31px 31px; }
.cta { display: block; width: 100%; height: 88px; border: 0; border-radius: 8px; background: #3e95ef; color: #fff; font: 600 28px Inter, sans-serif; }
.fab {
  position: absolute;
  left: 45px;
  bottom: 98px;
  width: 98px;
  height: 98px;
  display: flex;
  align-items: center;
  justify-content: center;
  border-radius: 50%;
  background: #fff;
  box-shadow: 0 1px 0 #ddd, 0 5px 0 #e4e4e4, 0 9px 0 #b8b8b8, 0 13px 4px #777, 0 16px 12px rgba(0,0,0,.3);
}

/* dock */
.desk { height: 164px; flex: none; padding: 8px 0 0 105px; }
.dock {
  width: 3373px;
  height: 145px;
  display: flex;
  align-items: flex-start;
  gap: 33px;
  padding: 19px 0 0 21px;
  border: 2px solid rgba(140,150,160,.75);
  border-radius: 44px;
  background: linear-gradient(90deg, #555d6e 0, #5c6670 50%, #646d70 100%);
}
.app { width: 92px; height: 123px; flex: none; position: relative; display: flex; flex-direction: column; align-items: center; }
.app > svg { width: 92px; height: 92px; flex: none; overflow: visible; }
.app-big > svg { width: 116px; height: 116px; margin-top: -11px; margin-bottom: -13px; }
.dot { width: 7px; height: 7px; margin-top: 21px; border-radius: 50%; background: #000; }
.dock-sep { width: 2px; height: 116px; margin: -8px 10px 0; flex: none; background: #2b3238; }
```
